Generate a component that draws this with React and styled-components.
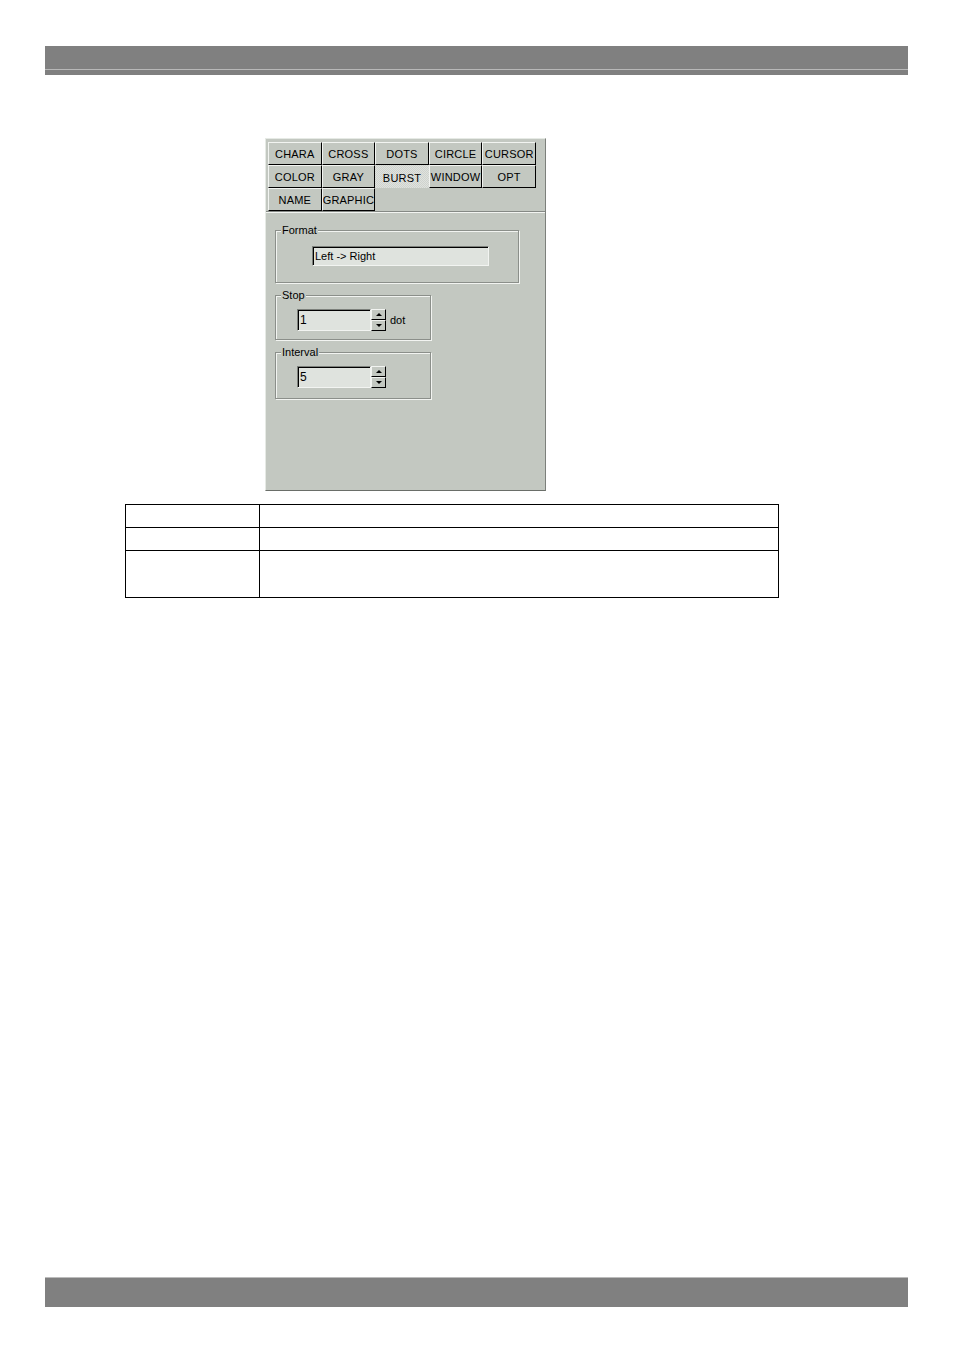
import React from "react";
import styled, { createGlobalStyle } from "styled-components";

const Global = createGlobalStyle`
  html, body { margin: 0; padding: 0; background: #fff; }
  body { font-family: "Liberation Sans", Arial, sans-serif; }
`;

const Page = styled.div`
  width: 954px;
  min-height: 1351px;
  display: flex;
  flex-direction: column;
  box-sizing: border-box;
  padding-top: 46px;
`;

const Bar = styled.div`
  margin: 0 46px 0 45px;
  height: ${(p) => p.$h}px;
  background: ${(p) =>
    p.$top
      ? "linear-gradient(to bottom, #bcbcbc 0 1px, #808080 1px)"
      : "linear-gradient(to bottom, #808080 0 23px, #b8b8b8 23px 24px, #808080 24px)"};
`;

const Footer = styled(Bar)`
  margin-top: auto;
  margin-bottom: 44px;
`;

const PanelRow = styled.div`
  padding: 63px 0 0 265px;
`;

const Panel = styled.div`
  width: 281px;
  height: 353px;
  box-sizing: border-box;
  background: #c3c8c1;
  border-top: 1px solid #e6eae5;
  border-left: 1px solid #e6eae5;
  border-right: 1px solid #7c807b;
  border-bottom: 1px solid #6a6e69;
  display: flex;
  flex-direction: column;
`;

const TabGrid = styled.div`
  display: grid;
  grid-template-columns: repeat(5, 53.6px);
  grid-auto-rows: 23px;
  padding: 3px 0 0 2px;
  height: 72px;
  box-sizing: border-box;
`;

const Tab = styled.div`
  box-sizing: border-box;
  display: flex;
  align-items: center;
  justify-content: center;
  font-size: 11px;
  letter-spacing: 0.2px;
  color: #000;
  white-space: nowrap;
  overflow: hidden;
  background: ${(p) =>
    p.$active
      ? "repeating-conic-gradient(#dfe2de 0 25%, #cfd3ce 0 50%) 0 0 / 2px 2px"
      : "#c3c8c1"};
  border-top: 1px solid ${(p) => (p.$active ? "transparent" : "#f2f4f1")};
  border-left: 1px solid ${(p) => (p.$active ? "transparent" : "#f2f4f1")};
  border-right: 1px solid ${(p) => (p.$active ? "transparent" : "#000")};
  border-bottom: 1px solid ${(p) => (p.$active ? "transparent" : "#000")};
  padding-top: ${(p) => (p.$active ? "2px" : "0")};
`;

const Body = styled.div`
  flex: 1;
  border-top: 1px solid #858985;
  box-shadow: inset 0 1px 0 #f2f4f1;
  padding: 12px 0 0 9px;
  display: flex;
  flex-direction: column;
  align-items: flex-start;
`;

const Group = styled.fieldset`
  margin: 0 0 ${(p) => p.$mb || 0}px 0;
  width: ${(p) => p.$w}px;
  box-sizing: border-box;
  border: 1px solid #8b8f8a;
  box-shadow: inset 1px 1px 0 #f2f4f1, 1px 1px 0 #f2f4f1;
  padding: 0;
  min-width: 0;
`;

const Legend = styled.legend`
  font-size: 11px;
  line-height: 13px;
  padding: 0 1px;
  margin-left: 5px;
  color: #000;
  background: #c3c8c1;
`;

const GroupInner = styled.div`
  padding: ${(p) => p.$pad};
`;

const Row = styled.div`
  display: flex;
  align-items: center;
`;

const Field = styled.div`
  box-sizing: border-box;
  width: ${(p) => p.$w}px;
  height: ${(p) => p.$h}px;
  background: #dfe3de;
  border-top: 1px solid #7c807b;
  border-left: 1px solid #7c807b;
  border-right: 1px solid #f2f4f1;
  border-bottom: 1px solid #f2f4f1;
  box-shadow: inset 1px 1px 0 #000;
  font-size: ${(p) => p.$fs || 11}px;
  line-height: 1;
  color: #000;
  display: flex;
  align-items: center;
  padding-left: 2px;
`;

const Spin = styled.div`
  display: flex;
  flex-direction: column;
  width: 15px;
  height: 22px;
`;

const SpinBtn = styled.div`
  flex: 1;
  box-sizing: border-box;
  background: #c3c8c1;
  border-top: 1px solid #f2f4f1;
  border-left: 1px solid #f2f4f1;
  border-right: 1px solid #000;
  border-bottom: 1px solid #000;
  display: flex;
  align-items: center;
  justify-content: center;
`;

const Arrow = styled.span`
  width: 0;
  height: 0;
  border-left: 3px solid transparent;
  border-right: 3px solid transparent;
  ${(p) => (p.$up ? "border-bottom: 3px solid #000;" : "border-top: 3px solid #000;")}
`;

const Unit = styled.span`
  font-size: 11px;
  color: #000;
  margin-left: 4px;
`;

const TableWrap = styled.div`
  padding: 13px 0 0 125px;
`;

const Table = styled.table`
  border-collapse: collapse;
  width: 654px;
`;

const Cell = styled.td`
  border: 1px solid #000;
  height: ${(p) => p.$h}px;
  padding: 0;
  width: ${(p) => p.$w || "auto"};
  box-sizing: border-box;
`;

const tabs = [
  "CHARA", "CROSS", "DOTS", "CIRCLE", "CURSOR",
  "COLOR", "GRAY", "BURST", "WINDOW", "OPT",
  "NAME", "GRAPHIC",
];

function Spinner() {
  return (
    <Spin>
      <SpinBtn><Arrow $up /></SpinBtn>
      <SpinBtn><Arrow /></SpinBtn>
    </Spin>
  );
}

export default function App() {
  return (
    <>
      <Global />
      <Page>
        <Bar $h={29} />
        <PanelRow>
          <Panel>
            <TabGrid>
              {tabs.map((t) => (
                <Tab key={t} $active={t === "BURST"}>{t}</Tab>
              ))}
            </TabGrid>
            <Body>
              <Group $w={244} $mb={6}>
                <Legend>Format</Legend>
                <GroupInner $pad="9px 0 16px 36px">
                  <Field $w={177} $h={20}>Left -&gt; Right</Field>
                </GroupInner>
              </Group>
              <Group $w={156} $mb={6}>
                <Legend>Stop</Legend>
                <GroupInner $pad="7px 0 8px 21px">
                  <Row>
                    <Field $w={74} $h={22} $fs={12}>1</Field>
                    <Spinner />
                    <Unit>dot</Unit>
                  </Row>
                </GroupInner>
              </Group>
              <Group $w={156}>
                <Legend>Interval</Legend>
                <GroupInner $pad="7px 0 10px 21px">
                  <Row>
                    <Field $w={74} $h={22} $fs={12}>5</Field>
                    <Spinner />
                  </Row>
                </GroupInner>
              </Group>
            </Body>
          </Panel>
        </PanelRow>
        <TableWrap>
          <Table>
            <tbody>
              <tr><Cell $h={23} $w="134px" /><Cell $h={23} /></tr>
              <tr><Cell $h={23} $w="134px" /><Cell $h={23} /></tr>
              <tr><Cell $h={47} $w="134px" /><Cell $h={47} /></tr>
            </tbody>
          </Table>
        </TableWrap>
        <Footer $h={30} $top />
      </Page>
    </>
  );
}
